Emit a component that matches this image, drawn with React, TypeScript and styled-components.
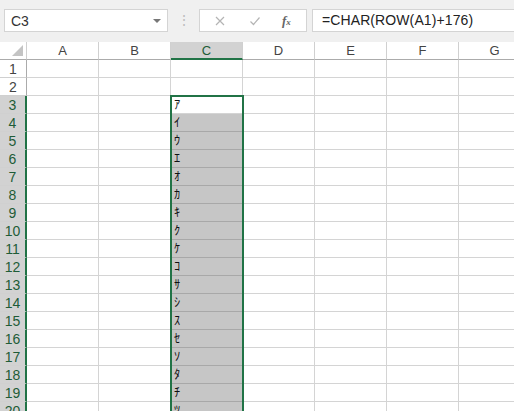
import styled, { createGlobalStyle } from "styled-components";

const GlobalStyle = createGlobalStyle`
  html, body {
    margin: 0;
    padding: 0;
    background: #ffffff;
  }
`;

const COLUMNS = ["A", "B", "C", "D", "E", "F", "G"];
const KANA = ["ｱ", "ｲ", "ｳ", "ｴ", "ｵ", "ｶ", "ｷ", "ｸ", "ｹ", "ｺ", "ｻ", "ｼ", "ｽ", "ｾ", "ｿ", "ﾀ", "ﾁ", "ﾂ"];
const ROWS = Array.from({ length: 20 }, (_, i) => i + 1);
const FONT = `"Liberation Sans", "Noto Sans CJK JP", sans-serif`;

const App = () => {
  return (
    <Page>
      <GlobalStyle />
      <Toolbar>
        <NameBox>
          <span>C3</span>
          <Caret />
        </NameBox>
        <Grip>⋮</Grip>
        <ButtonBox>
          <ToolIcon viewBox="0 0 12 12">
            <path d="M2 2 L10 10 M10 2 L2 10" stroke="#b4b4b4" strokeWidth="1.2" />
          </ToolIcon>
          <ToolIcon viewBox="0 0 12 12">
            <path d="M1.5 6.5 L4.5 9.5 L10.5 2.5" stroke="#b4b4b4" strokeWidth="1.2" fill="none" />
          </ToolIcon>
          <Fx>
            f<sub>x</sub>
          </Fx>
        </ButtonBox>
        <FormulaBox>=CHAR(ROW(A1)+176)</FormulaBox>
      </Toolbar>
      <Sheet>
        <Grid>
          <Corner>
            <svg width="11" height="11" viewBox="0 0 11 11">
              <polygon points="11,0 11,11 0,11" fill="#c4c4c4" />
            </svg>
          </Corner>
          {COLUMNS.map((c) => (
            <ColHeader key={c} $active={c === "C"}>
              {c}
            </ColHeader>
          ))}
          {ROWS.map((r) => (
            <RowGroup key={r} r={r} />
          ))}
        </Grid>
        <SelectionFrame />
      </Sheet>
    </Page>
  );
};

const RowGroup = ({ r }: { r: number }) => {
  const selected = r >= 3;
  return (
    <>
      <RowHeader $active={selected}>{r}</RowHeader>
      {COLUMNS.map((c) => {
        const inSel = c === "C" && r >= 3;
        return (
          <Cell key={c} $fill={inSel && r > 3}>
            {inSel ? KANA[r - 3] : ""}
          </Cell>
        );
      })}
    </>
  );
};

export default App;

const Page = styled.div`
  width: 514px;
  height: 411px;
  overflow: hidden;
  background: #ffffff;
  font-family: ${FONT};
`;

const Toolbar = styled.div`
  height: 42px;
  background: #f0f0f0;
  display: flex;
  align-items: flex-start;
  padding: 9px 0 0 4px;
  box-sizing: border-box;
`;

const NameBox = styled.div`
  width: 164px;
  height: 23px;
  box-sizing: border-box;
  background: #ffffff;
  border: 1px solid #d4d4d4;
  display: flex;
  align-items: center;
  justify-content: space-between;
  padding: 0 6px 0 6px;
  font-size: 14px;
  color: #333;
`;

const Caret = styled.div`
  width: 0;
  height: 0;
  border-left: 4px solid transparent;
  border-right: 4px solid transparent;
  border-top: 4px solid #777;
`;

const Grip = styled.div`
  width: 31px;
  height: 23px;
  text-align: center;
  line-height: 23px;
  color: #bdbdbd;
  font-size: 14px;
`;

const ButtonBox = styled.div`
  width: 108px;
  height: 23px;
  box-sizing: border-box;
  background: #ffffff;
  border: 1px solid #d4d4d4;
  display: flex;
  align-items: center;
  padding-left: 14px;
  gap: 23px;
`;

const ToolIcon = styled.svg`
  width: 12px;
  height: 12px;
`;

const Fx = styled.div`
  font-family: "Liberation Serif", serif;
  font-style: italic;
  font-weight: bold;
  font-size: 13px;
  color: #666;
  margin-left: -2px;
  sub {
    font-size: 9px;
    vertical-align: baseline;
  }
`;

const FormulaBox = styled.div`
  flex: 1;
  margin-left: 5px;
  height: 23px;
  box-sizing: border-box;
  background: #ffffff;
  border: 1px solid #d4d4d4;
  border-right: none;
  padding-left: 9px;
  font-size: 14px;
  letter-spacing: 0.1px;
  line-height: 21px;
  color: #222;
`;

const Sheet = styled.div`
  position: relative;
`;

const Grid = styled.div`
  display: grid;
  grid-template-columns: 27px repeat(7, 72px);
  grid-auto-rows: 18px;
`;

const Corner = styled.div`
  background: #ffffff;
  border-right: 1px solid #d0d0d0;
  border-bottom: 1px solid #ababab;
  box-sizing: border-box;
  display: flex;
  align-items: flex-end;
  justify-content: flex-end;
  padding: 0 3px 3px 0;
`;

const ColHeader = styled.div<{ $active?: boolean }>`
  box-sizing: border-box;
  background: ${(p) => (p.$active ? "#d2d2d2" : "#ffffff")};
  border-right: 1px solid #d0d0d0;
  border-bottom: ${(p) => (p.$active ? "2px solid #217346" : "1px solid #ababab")};
  text-align: center;
  font-size: 13px;
  line-height: 17px;
  color: ${(p) => (p.$active ? "#1e5c37" : "#444")};
`;

const RowHeader = styled.div<{ $active?: boolean }>`
  box-sizing: border-box;
  background: ${(p) => (p.$active ? "#d2d2d2" : "#ffffff")};
  border-right: ${(p) => (p.$active ? "2px solid #217346" : "1px solid #ababab")};
  border-bottom: 1px solid #d0d0d0;
  text-align: center;
  font-size: 14px;
  line-height: 18px;
  color: ${(p) => (p.$active ? "#1e5c37" : "#444")};
`;

const Cell = styled.div<{ $fill?: boolean }>`
  box-sizing: border-box;
  background: ${(p) => (p.$fill ? "#c6c6c6" : "#ffffff")};
  border-right: 1px solid #d4d4d4;
  border-bottom: 1px solid ${(p) => (p.$fill ? "#a8a8a8" : "#d4d4d4")};
  font-family: "Noto Sans CJK JP", sans-serif;
  font-size: 12.4px;
  line-height: 17px;
  padding-left: 3px;
  color: #111;
`;

const SelectionFrame = styled.div`
  position: absolute;
  left: 170px;
  top: 53px;
  width: 74px;
  height: 400px;
  box-sizing: border-box;
  border: 2px solid #217346;
  pointer-events: none;
`;
